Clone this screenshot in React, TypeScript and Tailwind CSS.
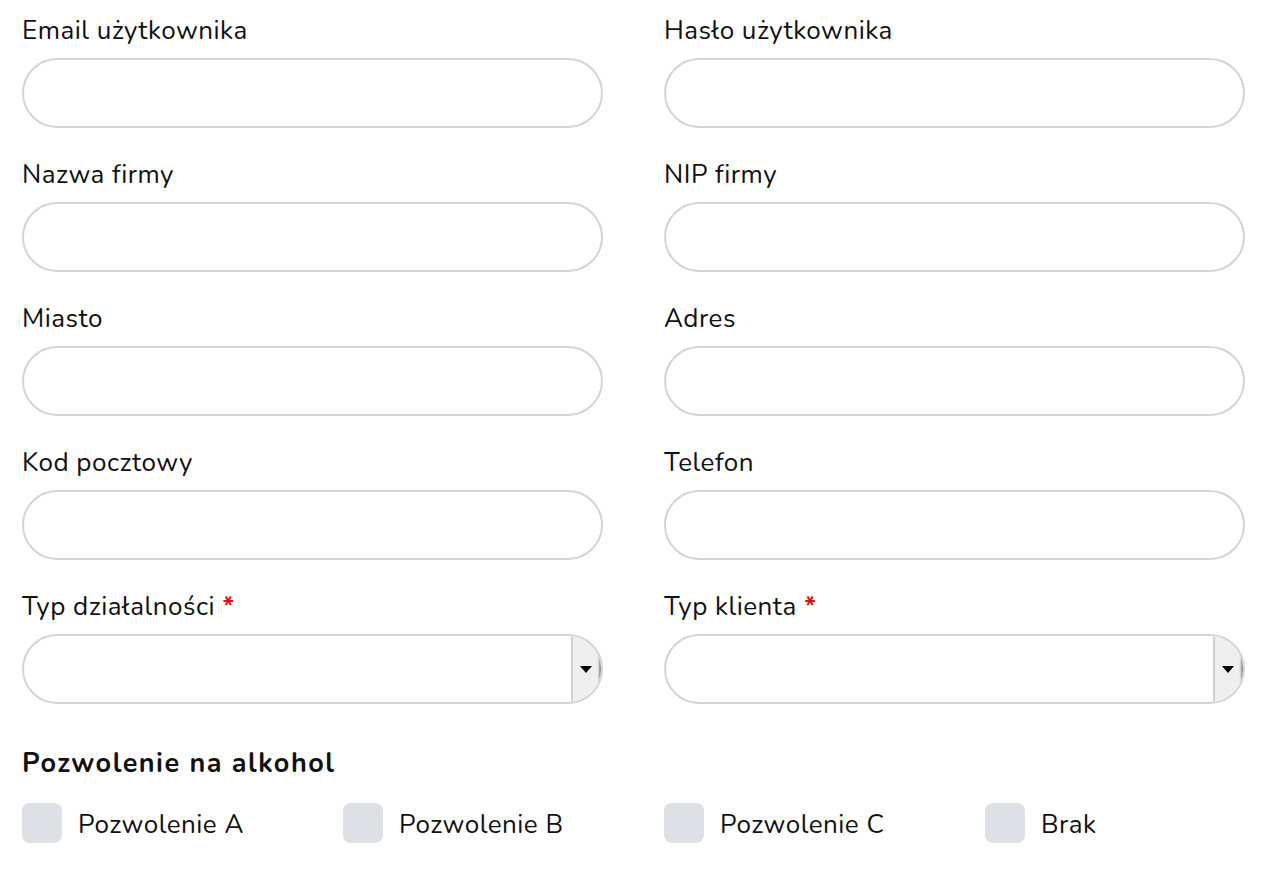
import React from "react";

const font = { fontFamily: "Nunito, Lato, 'Noto Sans', sans-serif" };

function Field({ label, required }: { label: string; required?: boolean }) {
  return (
    <div className="flex flex-col">
      <label className="pt-[1px] text-[26px] leading-[36px] tracking-[0.5px] text-[#111]">
        {label}
        {required && <span className="text-[#d11] font-bold"> *</span>}
      </label>
      <input
        type="text"
        className="mt-[9px] h-[70px] w-full rounded-full border-2 border-[#d4d4d4] bg-white px-6 outline-none"
      />
    </div>
  );
}

function SelectField({ label }: { label: string }) {
  return (
    <div className="flex flex-col">
      <label className="pt-[1px] text-[26px] leading-[36px] tracking-[0.5px] text-[#111]">
        {label}
        <span className="text-[#d11] font-bold"> *</span>
      </label>
      <div className="mt-[9px] flex h-[70px] w-full overflow-hidden rounded-full border-2 border-[#d4d4d4] bg-white">
        <div className="flex-1" />
        <div className="flex w-[30px] items-center justify-center border-l-2 border-[#d0d0d0] bg-[#efefef] pr-[3px] shadow-[inset_-3px_0_2px_-1px_#8a8a8a]">
          <div className="h-0 w-0 border-x-[6px] border-t-[7px] border-x-transparent border-t-black" />
        </div>
      </div>
    </div>
  );
}

function Check({ label }: { label: string }) {
  return (
    <label className="flex items-center gap-[16px]">
      <span className="h-[40px] w-[40px] rounded-[8px] bg-[#dde0e5]" />
      <span className="pt-[3px] text-[26px] leading-[36px] tracking-[0.5px] text-[#111]">{label}</span>
    </label>
  );
}

export default function App() {
  return (
    <div style={font} className="min-h-screen bg-white px-[22px] pr-[25px] pt-[12px]">
      <div className="grid grid-cols-2 gap-x-[61px] gap-y-[28px]">
        <Field label="Email użytkownika" />
        <Field label="Hasło użytkownika" />
        <Field label="Nazwa firmy" />
        <Field label="NIP firmy" />
        <Field label="Miasto" />
        <Field label="Adres" />
        <Field label="Kod pocztowy" />
        <Field label="Telefon" />
        <SelectField label="Typ działalności" />
        <SelectField label="Typ klienta" />
      </div>
      <h3 className="mt-[42px] text-[27px] font-bold leading-[36px] tracking-[1.5px] text-[#111]">Pozwolenie na alkohol</h3>
      <div className="mt-[21px] grid grid-cols-4 gap-x-[61px]">
        <Check label="Pozwolenie A" />
        <Check label="Pozwolenie B" />
        <Check label="Pozwolenie C" />
        <Check label="Brak" />
      </div>
    </div>
  );
}
